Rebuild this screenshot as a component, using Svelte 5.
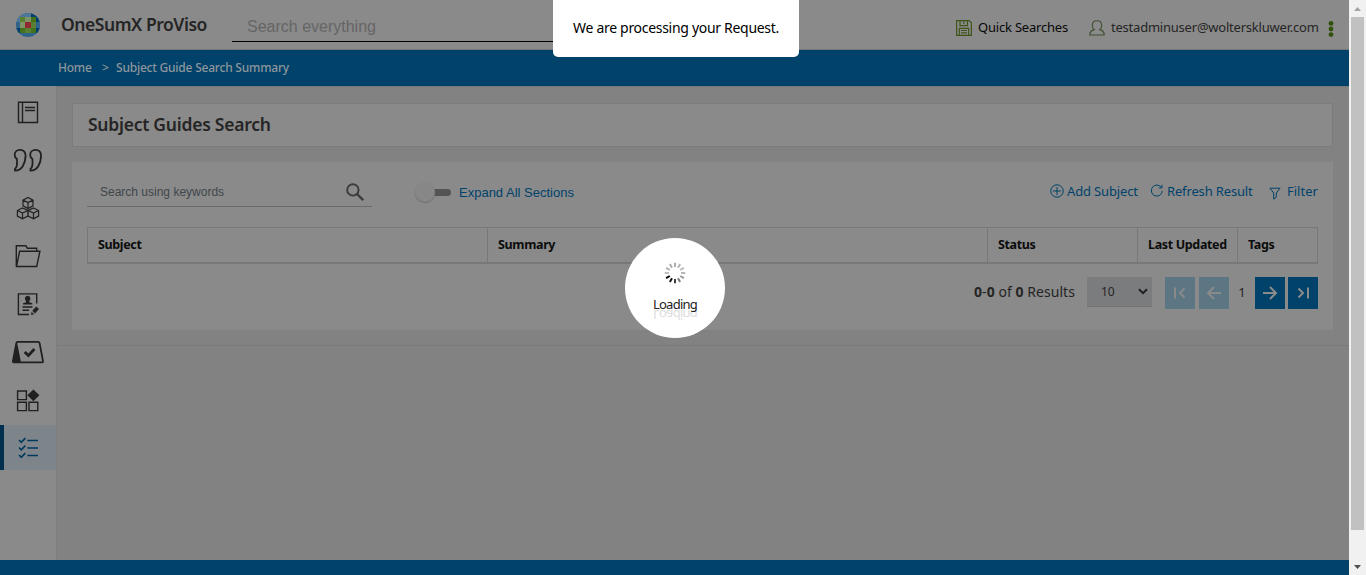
<script>
  const columns = ['Subject', 'Summary', 'Status', 'Last Updated', 'Tags'];
  const shades = ['#aaa', '#b4b4b4', '#bbb', '#b4b4b4', '#999', '#777', '#333', '#111', '#000', '#bbb', '#b0b0b0', '#aaa'];
  const ticks = shades.map((color, i) => ({ angle: i * 30, color }));
</script>

<div class="window">
  <div class="page">
    <header>
      <svg class="logo" width="24" height="24" viewBox="0 0 24 24">
        <defs><clipPath id="disc"><circle cx="12" cy="12" r="12" /></clipPath></defs>
        <g clip-path="url(#disc)">
          <path fill="#2f6288" d="M0 0h24v24H0z" />
          <path fill="#4e789a" d="M4 0h5v4H4zM0 4h4v5H0zM9 0h6v4H9z" />
          <path fill="#003f6b" d="M15 0h9v9h-4V4h-5zM0 15h4v5H0zM20 15h4v5h-4z" />
          <path fill="#45701c" d="M4 4h16v16H4z" />
          <path fill="#5a7f32" d="M4 4h5v5H4zM15 9h5v6h-5zM9 15h6v5H9z" />
          <path fill="#7c9468" d="M9 4h6v5H9zM4 9h5v6H4z" />
          <path fill="#912a30" d="M9 9h6v6H9z" />
        </g>
      </svg>
      <h1><span>OneSumX ProViso</span></h1>
      <div class="everything">Search everything</div>
      <div class="quick">
        <svg width="16" height="16" viewBox="0 0 16 16" fill="none" stroke="#3f5418" stroke-width="1.200">
          <path d="M.6.6h12.600l2.200 2.200v12.600H.6zM4 .6v5h7.500v-5M7.800 1.500v2.600M3.300 15V8.300h9.400V15M5 10.500h6M5 12.800h6" />
        </svg>
        <span>Quick Searches</span>
      </div>
      <div class="user">
        <svg width="16" height="16" viewBox="0 0 16 16" fill="none" stroke="#3f5030" stroke-width="1.100">
          <path d="M8 .8c-2.900 0-4.700 2-4.700 4.700 0 1.700.8 3.200 2 4.100C2.600 10.300.8 12 .7 15h14.600c-.1-3-1.900-4.700-4.600-5.400 1.200-.9 2-2.400 2-4.100C12.700 2.800 10.900.8 8 .8z" />
        </svg>
        <span>testadminuser@wolterskluwer.com</span>
      </div>
      <svg class="dots" width="6" height="16" viewBox="0 0 6 16" fill="#31510b">
        <circle cx="3" cy="2.400" r="2.400" /><circle cx="3" cy="8" r="2.400" /><circle cx="3" cy="13.600" r="2.400" />
      </svg>
    </header>

    <nav class="crumbs"><span class="home">Home</span><span class="sep">&gt;</span><span class="here">Subject Guide Search Summary</span></nav>

    <div class="body">
      <aside>
        <div class="item">
          <svg width="32" height="32" viewBox="0 0 32 32"><path d="M6.500 6.300h19v20.200h-19zM10.500 6.300v20.200M13 11.500h10M13 14.500h10" /></svg>
        </div>
        <div class="item">
          <svg width="32" height="32" viewBox="0 0 32 32"><path class="bold" d="M4.900 15C3.400 13.900 2.700 12.700 2.700 11c0-3.200 2.500-5.100 5.300-5.100 3.800 0 5.800 2.400 5.600 6.200C13.200 19 10.300 26.600 3 26.600v-1.700c1.900-1.400 2.300-6 1.900-9.900zM20.400 15c-1.500-1.100-2.200-2.300-2.200-4 0-3.200 2.500-5.100 5.300-5.100 3.800 0 5.800 2.400 5.600 6.200-.4 6.900-3.300 14.500-10.600 14.500v-1.700c1.900-1.400 2.300-6 1.900-9.900z" /></svg>
        </div>
        <div class="item">
          <svg width="32" height="32" viewBox="0 0 32 32"><path class="fine" d="M16 5.500l5 2.600v5.700l-5 2.700-5-2.700V8.100zM11 8.100l5 2.500 5-2.500M16 10.600v6M10.500 16l5.400 2.500v5.600l-5.400 2.700-5.100-2.700v-5.600zM5.400 18.500l5.100 2.500 5.400-2.500M10.500 21v5.800M21.500 16l5.100 2.500v5.600l-5.100 2.700-5.400-2.700v-5.600zM16.100 18.500l5.400 2.500 5.100-2.500M21.500 21v5.800" /></svg>
        </div>
        <div class="item">
          <svg width="32" height="32" viewBox="0 0 32 32"><path d="M4.300 26.500V5.800h9.500l1.600 2.400h9.300v3.300M4.500 26.500l3.100-15.200h20.300l-3.200 15.200z" /></svg>
        </div>
        <div class="item">
          <svg width="32" height="32" viewBox="0 0 32 32"><path d="M17 26.500H6.400V5.900h18.300v9.600M10.500 19h10M10.500 22.300h6.500" /><path class="solid" d="M15.700 7.800a2.900 2.900 0 0 1 1.600 5.200v1.300l3 .9v1.400H11v-1.400l3-.9V13a2.900 2.900 0 0 1 1.700-5.200zM24.300 18.500l2.700 2.600-4 4.300-2.700-2.600zM19.600 23.700l2.500 2.500-3.100.8z" /></svg>
        </div>
        <div class="item">
          <svg width="32" height="32" viewBox="0 0 32 32"><path class="bold" d="M5.500 5.900H26q1.400 0 1.600 1.200l3.400 18q.2 1.300-1 1.300H1.900q-1.200 0-1-1.300l3.400-18q.2-1.200 1.200-1.200z" /><path class="solid" d="M5 6L.9 26.600H9z" /><path class="check" d="M12.700 16l3.700 3.600 6-6.600" /></svg>
        </div>
        <div class="item">
          <svg width="32" height="32" viewBox="0 0 32 32"><path d="M5.600 7h8.800v8.600H5.600zM5.600 18.300h8.800v8.300H5.600zM17 18.300h8.800v8.300H17z" /><path class="solid" d="M21.400 5.400l6 5.900-6 5.900-6-5.900z" /></svg>
        </div>
        <div class="item active">
          <svg width="32" height="32" viewBox="0 0 32 32"><path d="M7 9l2.300 2.400 4-4.300M15.300 9.500h10.700M7 16.500l2.300 2.400 4-4.300M15.300 17h10.700M7 24l2.300 2.400 4-4.300M15.300 24.500h10.700" /></svg>
        </div>
      </aside>

      <main>
        <section class="title"><span>Subject Guides Search</span></section>
        <section class="panel">
          <div class="tools">
            <div class="keywords">
              <span>Search using keywords</span>
              <svg width="18" height="18" viewBox="0 0 18 18" fill="none" stroke="#3b3b3b"><circle cx="6.900" cy="6.900" r="5.700" stroke-width="1.900" /><path stroke-width="2.300" d="M11 11l6.200 6.200" /></svg>
            </div>
            <div class="toggle"><i></i></div>
            <span class="expand">Expand All Sections</span>
            <div class="actions">
              <svg width="14" height="14" viewBox="0 0 14 14"><circle cx="7" cy="7" r="6.200" /><path d="M7 3v8M3 7h8" /></svg>
              <span class="add">Add Subject</span>
              <svg width="14" height="14" viewBox="0 0 14 14"><path d="M11.300 3.400A5.500 5.500 0 1 0 12.300 7M12 .8v3.100H8.800" /></svg>
              <span class="refresh">Refresh Result</span>
              <svg class="funnel" width="12" height="13" viewBox="0 0 12 13"><path d="M.9 1.200h10.200L7.300 6v4.200l-2.600 1.900V6z" /></svg>
              <span class="filter">Filter</span>
            </div>
          </div>
          <div class="table">
            {#each columns as c}<div class="th"><span>{c}</span></div>{/each}
          </div>
          <div class="pager">
            <span class="count"><b>0</b>-<b>0</b> of <b>0</b> Results</span>
            <div class="select"><span>10</span><svg width="10" height="7" viewBox="0 0 10 7" fill="none" stroke="#202020" stroke-width="2"><path d="M1 1.200l4 4 4-4" /></svg></div>
            <div class="btn off"><svg width="16" height="16" viewBox="0 0 16 16"><path d="M3 2.500v11M12.500 3.500L8 8l4.500 4.500" /></svg></div>
            <div class="btn off prev"><svg width="16" height="16" viewBox="0 0 16 16"><path d="M15 8H2.500M8 2L2 8l6 6" /></svg></div>
            <span class="num">1</span>
            <div class="btn"><svg width="16" height="16" viewBox="0 0 16 16"><path d="M1 8h12.500M8 2l6 6-6 6" /></svg></div>
            <div class="btn last"><svg width="16" height="16" viewBox="0 0 16 16"><path d="M13 2.500v11M3.500 3.500L8 8l-4.500 4.500" /></svg></div>
          </div>
        </section>
        <hr />
      </main>
    </div>
    <footer></footer>

    <div class="notice"><span>We are processing your Request.</span></div>
    <div class="loader">
      <svg width="22" height="22" viewBox="-11 -11 22 22">
        {#each ticks as t}<path d="M0-6v-4.300" stroke={t.color} stroke-width="1.900" transform="rotate({t.angle})" />{/each}
      </svg>
      <span class="label">Loading</span>
      <span class="mirror" aria-hidden="true">Loading</span>
    </div>
  </div>
  <div class="scroll">
    <svg width="17" height="17" viewBox="0 0 17 17"><path fill="#a3a3a3" d="M5 11l3.500-4 3.500 4z" /></svg>
    <div class="thumb"></div>
    <svg class="down" width="17" height="17" viewBox="0 0 17 17"><path fill="#505050" d="M5 7h7l-3.500 4z" /></svg>
  </div>
</div>

<style>
  :global(body) { margin: 0; overflow: hidden; }
  * { box-sizing: border-box; }
  .window { display: flex; width: 1366px; height: 575px; font-family: "Noto Sans", sans-serif; font-size: 13px; color: #252525; white-space: nowrap; }
  svg { display: block; flex: none; }
  .page { position: relative; width: 1349px; display: flex; flex-direction: column; background: #828282; }
  header { height: 50px; background: #8a8a8a; border-bottom: 1px solid #777; display: flex; align-items: flex-start; }
  .logo { margin: 13px 0 0 16px; }
  h1 { margin: 11px 0 0 21px; width: 171px; font-size: 17.500px; line-height: 26px; font-weight: 600; letter-spacing: -.45px; color: #252525; }
  .everything { width: 321px; height: 42px; border-bottom: 1px solid #000; padding: 16px 0 0 15px; font: 16px/21px "Liberation Sans", sans-serif; color: #656565; }
  .quick { display: flex; margin: 19px 0 0 403px; width: 133px; gap: 6px; color: #080808; line-height: 16px; letter-spacing: -.2px; }
  .user { display: flex; margin-top: 19px; width: 239px; gap: 6px; line-height: 16px; letter-spacing: -.22px; }
  .quick svg, .user svg { margin-top: 1px; }
  .dots { margin-top: 21px; }
  .crumbs { height: 36px; background: #00426a; display: flex; padding-left: 58px; line-height: 36px; font-size: 12px; font-weight: 500; color: #8d969c; letter-spacing: -.22px; }
  .home { width: 44px; }
  .sep { width: 14px; }
  .body { flex: 1; display: flex; }
  aside { width: 57px; background: #8a8a8a; border-right: 1px solid #7e7e7e; padding-top: 3px; display: flex; flex-direction: column; gap: 3px; }
  .item { height: 45px; width: 56px; display: flex; align-items: flex-start; justify-content: center; padding-top: 7px; }
  .item path { fill: none; stroke: #202020; stroke-width: 1.400; }
  .item .fine { stroke-width: 1.200; }
  .item .bold { stroke-width: 1.800; }
  .item .check { stroke-width: 2.800; }
  .item .solid { fill: #202020; stroke: none; }
  .item.active { background: #7d858a; border-left: 4px solid #00304f; padding-right: 4px; padding-top: 6px; }
  .active path { stroke: #00395d; stroke-width: 1.600; }
  main { flex: 1; padding: 16px 0 0 15px; border-top: 1px solid #777; display: flex; flex-direction: column; }
  .title { width: 1261px; height: 44px; border: 1px solid #7c7c7c; background: #8a8a8a; padding-left: 15px; font-size: 17.500px; font-weight: 600; line-height: 40px; letter-spacing: -.25px; }
  .panel { width: 1261px; height: 168px; margin-top: 15px; background: #8a8a8a; padding: 0 15px; }
  .tools { height: 65px; display: flex; align-items: flex-start; }
  .keywords { width: 285px; height: 45px; border-bottom: 1px solid #6a6a6a; padding: 20px 8px 0 13px; display: flex; justify-content: space-between; font: 12px/20px "Liberation Sans", sans-serif; color: #40464a; }
  .keywords svg { margin-top: 1px; }
  .toggle { margin: 27px 0 0 50px; width: 29px; height: 7px; background: #545454; border-radius: 4px; position: relative; }
  .toggle i { position: absolute; left: -7px; top: -7px; width: 20px; height: 20px; border-radius: 50%; background: #878787; box-shadow: 0 1px 1px #6e6e6e; }
  .expand { margin: 21px 0 0 8px; font: 13px/20px "Liberation Sans", sans-serif; color: #00426a; }
  .actions { margin: 20px 0 0 auto; display: flex; line-height: 18px; color: #00426a; }
  .actions svg { margin-top: 2px; fill: none; stroke: #00426a; stroke-width: 1; }
  .add { margin-left: 3px; width: 83px; letter-spacing: -.15px; }
  .refresh { margin-left: 3px; width: 102px; letter-spacing: -.15px; }
  .actions .funnel { margin-top: 5px; }
  .filter { margin-left: 6px; width: 31px; }
  .table { width: 1231px; height: 37px; border: 1px solid #787878; border-bottom-width: 2px; display: grid; grid-template-columns: 400px 500px 150px 100px 79px; }
  .th { padding-left: 10px; border-right: 1px solid #787878; font-size: 12.500px; font-weight: 700; line-height: 33px; color: #0c0c0c; letter-spacing: -.35px; }
  .th:last-child { border: 0; }
  .pager { margin-top: 13px; height: 32px; display: flex; justify-content: flex-end; align-items: flex-start; line-height: 30px; }
  .count { width: 113px; font-size: 14px; letter-spacing: .05px; }
  .select { width: 65px; height: 30px; background: #7b7c7e; border-bottom: 1px solid #747474; margin-right: 13px; padding: 0 4px 0 14px; display: flex; justify-content: space-between; align-items: center; font-size: 12px; }
  .btn { width: 30px; height: 32px; background: #00426a; display: flex; align-items: center; justify-content: center; }
  .btn path { fill: none; stroke: #8a8a8a; stroke-width: 2; }
  .btn.off { background: #5d7684; }
  .prev { margin-left: 4px; }
  .num { width: 26px; text-align: center; }
  .last { margin-left: 3px; }
  hr { margin: 15px 0 0 -15px; border: 0; height: 1px; background: #7a7a7a; }
  footer { height: 15px; background: #00426a; }
  .notice { position: absolute; left: 553px; top: 0; width: 246px; height: 57px; background: #fff; border-radius: 0 0 5px 5px; color: #000; padding-left: 20px; line-height: 56px; font-size: 14px; letter-spacing: -.3px; }
  .loader { position: absolute; left: 625px; top: 238px; width: 100px; height: 100px; border-radius: 50%; background: #fff; display: flex; flex-direction: column; align-items: center; padding-top: 24px; line-height: 16px; color: #222; letter-spacing: -.75px; }
  .loader svg { margin-bottom: 12px; }
  .label { position: relative; z-index: 1; }
  .mirror { transform: scaleY(-1); margin-top: -5px; height: 16px; color: #ddd; }
  .scroll { width: 17px; background: #f1f1f1; display: flex; flex-direction: column; }
  .thumb { height: 513px; width: 13px; margin-left: 2px; background: #c1c1c1; }
  .down { margin-top: auto; }
</style>
